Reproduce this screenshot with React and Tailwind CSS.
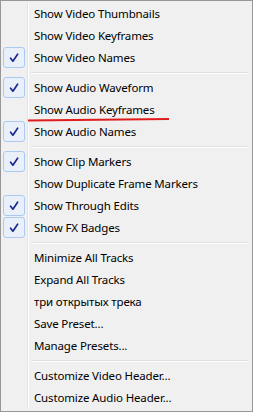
import React from 'react';

const groups = [
  [
    { label: 'Show Video Thumbnails' },
    { label: 'Show Video Keyframes' },
    { label: 'Show Video Names', checked: true },
  ],
  [
    { label: 'Show Audio Waveform', checked: true },
    { label: 'Show Audio Keyframes' },
    { label: 'Show Audio Names', checked: true },
  ],
  [
    { label: 'Show Clip Markers', checked: true },
    { label: 'Show Duplicate Frame Markers' },
    { label: 'Show Through Edits', checked: true },
    { label: 'Show FX Badges', checked: true },
  ],
  [
    { label: 'Minimize All Tracks' },
    { label: 'Expand All Tracks' },
    { label: 'три открытых трека' },
    { label: 'Save Preset...' },
    { label: 'Manage Presets...' },
  ],
  [
    { label: 'Customize Video Header...' },
    { label: 'Customize Audio Header...' },
  ],
];

function Check() {
  return (
    <div className="w-[22px] h-[21px] rounded-[3px] border border-[#a9c9f1] bg-[#e9f0fa] flex items-center justify-center">
      <svg width="10" height="10" viewBox="0 0 10 10">
        <path d="M1.6 5.2 L3.9 8.2 L8.6 1.2" fill="none" stroke="#1c2a8e" strokeWidth="1.7" strokeLinecap="round" strokeLinejoin="round" />
      </svg>
    </div>
  );
}

function Item({ label, checked }) {
  return (
    <div className="flex h-[22px]">
      <div className="w-[25px] border-r border-[#e2e3e3] flex items-start">
        {checked && <Check />}
      </div>
      <div className="flex-1 border-l border-white pl-[5px] flex items-center text-black">
        {label}
      </div>
    </div>
  );
}

function Separator() {
  return (
    <div className="flex h-[8px]">
      <div className="w-[25px] border-r border-[#e2e3e3]" />
      <div className="flex-1 border-l border-white pl-[2px] pr-[1px] pt-[3px]">
        <div className="h-px bg-[#e0e0e0]" />
        <div className="h-px bg-white" />
      </div>
    </div>
  );
}

export default function App() {
  return (
    <div
      className="relative w-[253px] h-[412px] border border-[#979797] bg-[#f0f0f0] p-[2px] text-[11.5px] tracking-[-0.15px] leading-none"
      style={{ fontFamily: '"Segoe UI", "Noto Sans", sans-serif' }}
    >
      <div className="flex flex-col">
        {groups.map((g, i) => (
          <React.Fragment key={i}>
            {i > 0 && <Separator />}
            {g.map((it) => (
              <Item key={it.label} {...it} />
            ))}
          </React.Fragment>
        ))}
      </div>
      <svg className="absolute left-0 top-0 pointer-events-none" width="253" height="412">
        <path d="M27 119.5 L168 118" stroke="#e01c1c" strokeWidth="2" fill="none" />
      </svg>
    </div>
  );
}
